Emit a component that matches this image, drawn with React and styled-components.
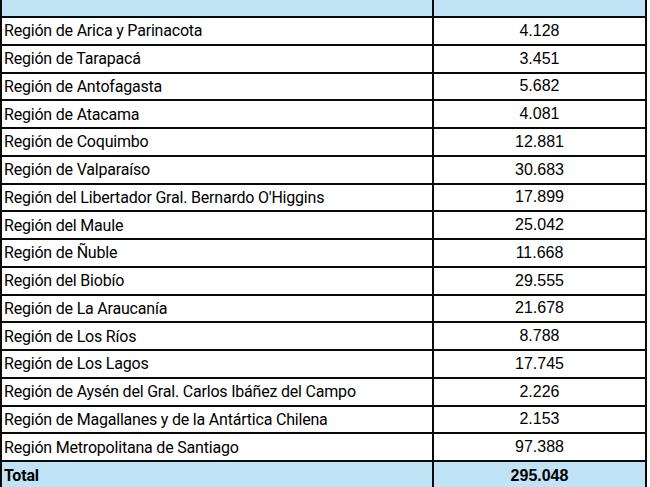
import React from "react";
import styled, { createGlobalStyle } from "styled-components";

const Global = createGlobalStyle`
  html, body { margin: 0; padding: 0; background: #ffffff; }
  body { overflow: hidden; }
`;

const Table = styled.div`
  width: 647px;
  border-left: 2px solid #0a0a0a;
  border-right: 2px solid #0a0a0a;
  box-sizing: border-box;
`;

const Row = styled.div`
  display: grid;
  grid-template-columns: 432px 1fr;
  height: ${(p) => p.$h}px;
  background: ${(p) => (p.$accent ? "#c0e4f5" : "#ffffff")};
  border-bottom: 2px solid #0a0a0a;
  box-sizing: content-box;
`;

const Name = styled.div`
  display: flex;
  align-items: center;
  padding-left: 2px;
  border-right: 2px solid #0a0a0a;
  font-family: Roboto, "Liberation Sans", sans-serif;
  font-size: 16px;
  letter-spacing: -0.2px;
  font-weight: ${(p) => (p.$bold ? 700 : 400)};
  color: #000;
  white-space: nowrap;
  overflow: hidden;
`;

const Value = styled.div`
  display: flex;
  align-items: center;
  justify-content: center;
  font-family: "Liberation Sans", Arial, sans-serif;
  font-size: 16px;
  font-weight: ${(p) => (p.$bold ? 700 : 400)};
  color: #000;
`;

const rows = [
  ["Región de Arica y Parinacota", "4.128"],
  ["Región de Tarapacá", "3.451"],
  ["Región de Antofagasta", "5.682"],
  ["Región de Atacama", "4.081"],
  ["Región de Coquimbo", "12.881"],
  ["Región de Valparaíso", "30.683"],
  ["Región del Libertador Gral. Bernardo O'Higgins", "17.899"],
  ["Región del Maule", "25.042"],
  ["Región de Ñuble", "11.668"],
  ["Región del Biobío", "29.555"],
  ["Región de La Araucanía", "21.678"],
  ["Región de Los Ríos", "8.788"],
  ["Región de Los Lagos", "17.745"],
  ["Región de Aysén del Gral. Carlos Ibáñez del Campo", "2.226"],
  ["Región de Magallanes y de la Antártica Chilena", "2.153"],
  ["Región Metropolitana de Santiago", "97.388"],
];

export default function App() {
  return (
    <>
      <Global />
      <Table>
        <Row $accent $h={16}>
          <Name />
          <Value />
        </Row>
        {rows.map(([n, v]) => (
          <Row key={n} $h={25.75}>
            <Name>{n}</Name>
            <Value>{v}</Value>
          </Row>
        ))}
        <Row $accent $h={27}>
          <Name $bold>Total</Name>
          <Value $bold>295.048</Value>
        </Row>
      </Table>
    </>
  );
}
